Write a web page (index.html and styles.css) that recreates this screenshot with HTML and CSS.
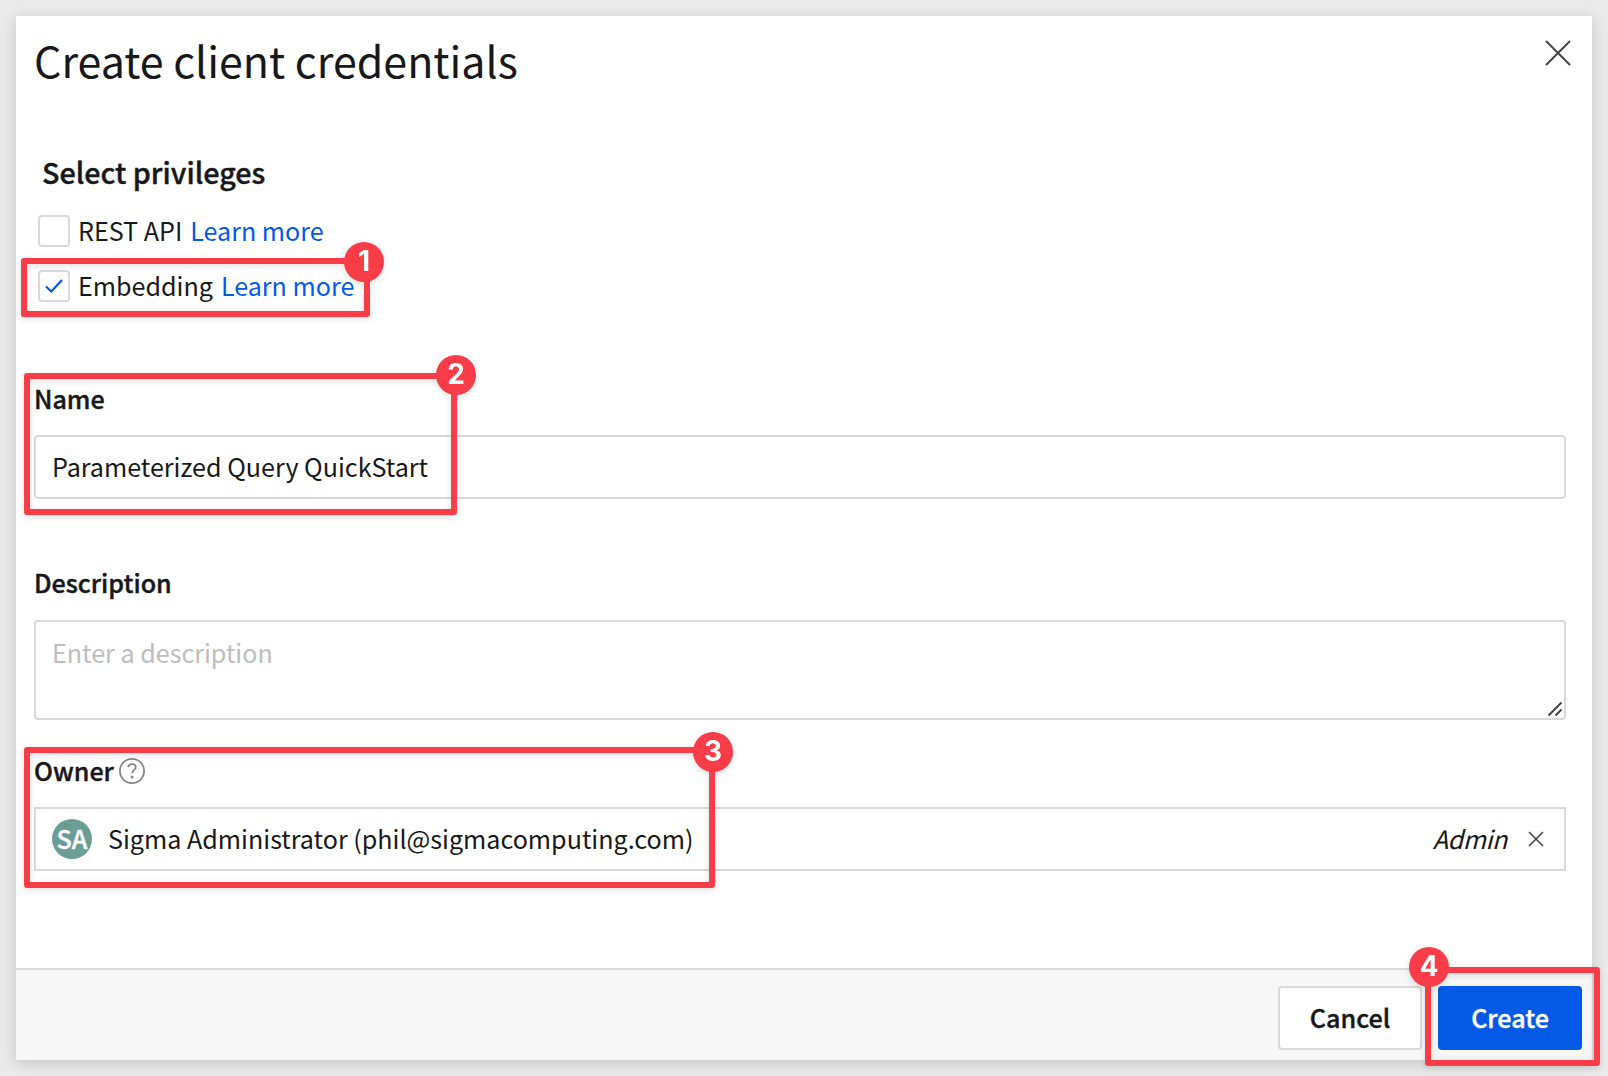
FILE: index.html
```html
<!DOCTYPE html>
<html lang="en">
<head>
<meta charset="utf-8">
<title>Create client credentials</title>
<link rel="stylesheet" href="styles.css">
</head>
<body>
<main class="modal">
  <header class="modal-header">
    <h1 class="title">Create client credentials</h1>
    <svg class="close" width="28" height="28" viewBox="0 0 28 28"><path d="M2 2l24 24M26 2L2 26"/></svg>
  </header>
  <section class="content">
    <h2 class="subtitle">Select privileges</h2>
    <div class="option">
      <span class="checkbox"></span>
      <span class="option-text">REST API</span>
      <a class="link">Learn more</a>
    </div>
    <div class="option">
      <span class="checkbox"><svg width="20" height="16" viewBox="0 0 20 16"><path d="M2 8.5l5.3 5L18 2"/></svg></span>
      <span class="option-text">Embedding</span>
      <a class="link">Learn more</a>
    </div>
    <div class="field name-field">
      <div class="label">Name</div>
      <div class="input"><span>Parameterized Query QuickStart</span></div>
    </div>
    <div class="field description-field">
      <div class="label">Description</div>
      <div class="input textarea"><span>Enter a description</span>
        <svg class="grip" width="16" height="16" viewBox="0 0 16 16"><path d="M1.5 14.5L14.5 1.5M8.5 14.5l6-6"/></svg>
      </div>
    </div>
    <div class="field owner-field">
      <div class="label">Owner
        <svg class="help" width="26" height="26" viewBox="0 0 26 26"><circle cx="13" cy="13" r="12.1"/><path d="M9.3 9.2c.2-2 1.7-3 3.7-3 2.2 0 3.7 1.1 3.7 3 0 2.6-3.5 3-3.5 6.2"/><circle class="dot" cx="13.1" cy="19" r="1.5"/></svg>
      </div>
      <div class="input owner">
        <span class="avatar">SA</span>
        <span class="person">Sigma Administrator (phil@sigmacomputing.com)</span>
        <em class="role">Admin</em>
        <svg class="clear" width="16" height="16" viewBox="0 0 16 16"><path d="M1 1l14 14M15 1L1 15"/></svg>
      </div>
    </div>
  </section>
  <footer class="footer">
    <div class="button">Cancel</div>
    <div class="button primary">Create</div>
  </footer>
</main>
<div class="callout c1"><span class="badge">1</span></div>
<div class="callout c2"><span class="badge">2</span></div>
<div class="callout c3"><span class="badge">3</span></div>
<div class="callout c4"><span class="badge">4</span></div>
</body>
</html>
```
FILE: styles.css
```css
* { box-sizing: border-box; }
body {
  margin: 0;
  padding: 16px 16px 16px 15.5px;
  width: 1608px;
  height: 1076px;
  overflow: hidden;
  background: #eaeaea;
  color: #17181a;
  font: 25.1px/36px "Noto Sans CJK SC", sans-serif;
}
svg { display: block; fill: none; stroke: #444; stroke-width: 2; flex: none; }
.modal {
  display: flex;
  flex-direction: column;
  height: 1044px;
  background: #fff;
  box-shadow: 0 3px 14px rgba(0, 0, 0, .16);
}
.modal-header { display: flex; justify-content: space-between; height: 126px; padding: 10px 20px 0 18.5px; }
.title { margin: 0; font-size: 42.95px; font-weight: 400; line-height: 66px; white-space: nowrap; }
.close { margin-top: 13px; }
.content { flex: 1; padding: 0 26px 0 18.5px; }
.subtitle, .label, .button, .avatar { font-weight: 500; -webkit-text-stroke: .4px currentColor; }
.subtitle { margin: 0 0 18px 8px; font-size: 28.7px; line-height: 60px; height: 55px; }
.option { display: flex; align-items: center; height: 32px; margin: 0 0 23px 4px; white-space: nowrap; }
.checkbox { display: flex; align-items: center; justify-content: center; width: 32px; height: 32px; border: 2px solid #d9d9d9; border-radius: 4px; margin-right: 8px; }
.checkbox svg { stroke: #0559e7; stroke-width: 2.2; }
.option-text, .link { padding-bottom: 2px; }
.link { color: #0559e7; margin-left: 8px; }
.label { display: flex; align-items: center; height: 36px; }
.input { display: flex; align-items: center; height: 64px; border: 2px solid #d9d9d9; border-radius: 4px; padding: 0 17px 0 16px; white-space: nowrap; }
.input > span:not(.avatar) { padding-bottom: 2px; }
.name-field { padding-top: 55px; }
.name-field .label { margin-bottom: 19px; }
.description-field { padding-top: 65px; }
.description-field .label { margin-bottom: 20px; }
.textarea { position: relative; height: 100px; align-items: flex-start; padding-top: 11.5px; color: #bdbdbd; }
.grip { position: absolute; right: 1px; bottom: 1px; }
.owner-field { padding-top: 32px; }
.owner-field .label { margin-bottom: 19px; }
.help { margin: 1px 0 0 5px; stroke: #858585; stroke-width: 1.8; }
.help .dot { fill: #858585; stroke: none; }
.owner { border-radius: 0; }
.avatar { width: 40px; height: 40px; border-radius: 50%; background: #6a9d94; color: #fff; text-align: center; line-height: 38px; }
.person { margin-left: 16px; }
.role { margin-left: auto; margin-right: 21px; padding-bottom: 3px; letter-spacing: -.4px; }
.clear { margin-right: 3px; stroke-width: 1.6; }
.footer { display: flex; justify-content: flex-end; gap: 16px; height: 92px; padding: 16px 10px 0; border-top: 2px solid #d9d9d9; background: #f7f7f7; }
.button { width: 144px; height: 64px; border: 2px solid #d9d9d9; border-radius: 4px; background: #fff; text-align: center; line-height: 58px; }
.primary { background: #0559e7; border-color: #0559e7; color: #fff; }
.callout { position: absolute; border: 6px solid #f93d48; border-radius: 3px; filter: drop-shadow(0 2px 3px rgba(0, 0, 0, .13)); }
.badge { position: absolute; width: 40px; height: 40px; border-radius: 50%; background: #f93d48; color: #fff; font: 700 28px/38px Inter, sans-serif; text-align: center; }
.c1 { left: 21px; top: 258px; width: 349px; height: 59px; }
.c1 .badge { left: 317px; top: -22px; }
.c2 { left: 23.5px; top: 373px; width: 433.5px; height: 142px; }
.c2 .badge { left: 406.5px; top: -24px; }
.c3 { left: 24px; top: 747px; width: 691px; height: 141px; }
.c3 .badge { left: 663px; top: -21px; }
.c4 { left: 1425px; top: 967px; width: 175px; height: 99px; }
.c4 .badge { left: -22px; top: -26px; }
```
